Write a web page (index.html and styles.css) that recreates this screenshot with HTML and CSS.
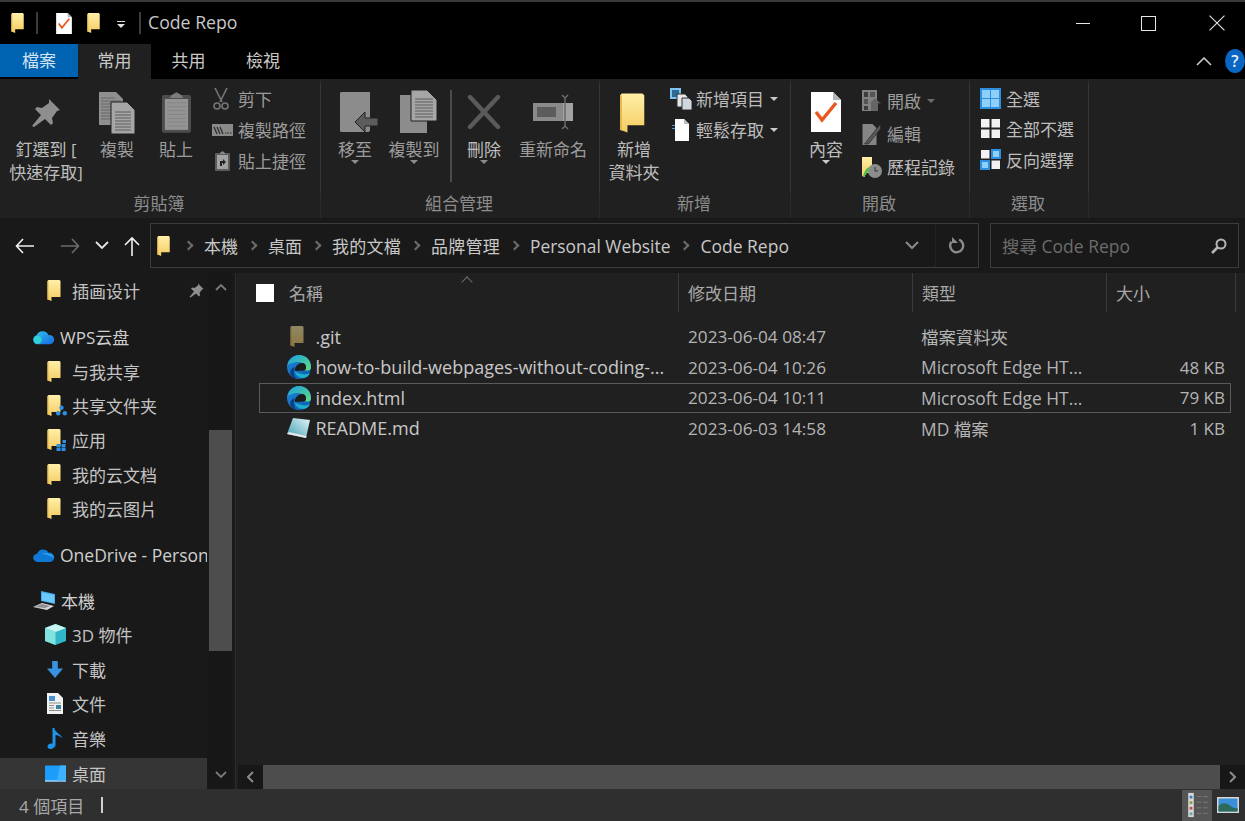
FILE: index.html
```html
<!DOCTYPE html>
<html lang="zh-Hant">
  <head>
    <title>Code Repo</title>
    <meta charset="UTF-8" />
    <link rel="stylesheet" href="styles.css">
  </head>
  <body>
    <svg class="defs" aria-hidden="true">
      <defs>
        <linearGradient id="yellow" x1="0" y1="0" x2="0" y2="1"><stop offset="0" stop-color="#fff0a8"/><stop offset="1" stop-color="#f5cb62"/></linearGradient>
        <linearGradient id="edgeTop" x1="0" y1="0" x2="1" y2="1"><stop offset="0" stop-color="#1a9fe0"/><stop offset="1" stop-color="#62dc84"/></linearGradient>
        <linearGradient id="edgeLow" x1="0" y1="0" x2="1" y2="1"><stop offset="0" stop-color="#1e88dc"/><stop offset="1" stop-color="#0b5aa8"/></linearGradient>
        <linearGradient id="paper" x1="1" y1="0" x2="0" y2="1"><stop offset="0" stop-color="#e6f6f8"/><stop offset="1" stop-color="#3d9db0"/></linearGradient>
        <linearGradient id="cloudWps" x1="0" y1="0" x2="1" y2="1"><stop offset="0" stop-color="#35c4f0"/><stop offset="1" stop-color="#1468e0"/></linearGradient>

        <symbol id="folder" viewBox="0 0 15 21"><path d="M0 1 1 0h11l1 1v16H4v4l-4-1.5z" fill="url(#yellow)"/><path d="M0 1v18.5L1 20V1z" fill="#e6b54c"/></symbol>
        <symbol id="edge" viewBox="0 0 24 24"><circle cx="12" cy="12" r="12" fill="url(#edgeLow)"/><path d="M.5 10C2 4 7 0 12 0c7 0 12 5 12 12 0 2-1 3.5-3 3.5h-4c1-1 1.5-2 1-3.5-1-3-4-5-7-5-5 0-9 2-10.5 3z" fill="url(#edgeTop)"/><path d="M8 16c-.5-4 3-8 7-8 3 0 4 2 4 4.5 0 1.5-.5 2.500-1.500 3z" fill="#1c1c1c"/><path d="M8 16c0 4 4 7 8 7 3 0 6-2 7-5-2 1-5 2-8 1-3-.5-6-1.5-7-3z" fill="#1cb0d0"/><path d="M8 12C4 13 2 17 4 20c1 1.5 3 3 5 3.5-2-3-3-7-1-11.5z" fill="#0a3f80"/></symbol>
        <symbol id="pin" viewBox="0 0 30 30"><path d="M18 1l11 11-3 1-5 7 1 5-2 2-6-6L3 29l-2-1 9-11-6-6 2-2 5 1 7-5z" fill="#8e8e8e"/></symbol>
        <symbol id="copy" viewBox="0 0 36 42"><path d="M0 0h17l7 7v26H0z" fill="#8f8f8f"/><path d="M2 6h14M2 9h20M2 12h10M2 15h10M2 18h10M2 21h10M2 24h10M2 27h10" stroke="#666"/><path d="M12 10h16l8 8v24H12z" fill="#a6a6a6" stroke="#202020"/><path d="M16 20h16M16 23h16M16 26h16M16 29h16M16 32h16M16 35h16M16 38h16" stroke="#5d5d5d"/></symbol>
        <symbol id="paste" viewBox="0 0 30 42"><rect y="3" width="30" height="39" rx="2" fill="#4d4d4d"/><path d="M10 3l5-3 5 3 2 3H8z" fill="#7c7c7c"/><path d="M3 7h24v32H3z" fill="#949494"/><path d="M5 11h20M5 15h20M5 19h20M5 23h20M5 27h20M5 31h20M5 35h20" stroke="#858585"/></symbol>
        <symbol id="scissors" viewBox="0 0 16 22"><path d="M2 0l7 14M14 0 7 14" stroke="#767676" stroke-width="1.6" fill="none"/><circle cx="4" cy="18" r="3" stroke="#767676" stroke-width="1.6" fill="none"/><circle cx="12" cy="18" r="3" stroke="#767676" stroke-width="1.6" fill="none"/></symbol>
        <symbol id="path" viewBox="0 0 21 12"><rect width="21" height="12" fill="#8a8a8a"/><path d="M2 3l3 7M5 3l3 7M8 3l3 7" stroke="#2a2a2a" stroke-width="1.2"/><path d="M13 9h1.5M15.5 9H17M18 9h1.5" stroke="#2a2a2a" stroke-width="1.2"/></symbol>
        <symbol id="shortcut" viewBox="0 0 15 20"><rect y="2" width="15" height="18" rx="1" fill="#5c5c5c"/><path d="M5 2l2.5-2L10 2v1H5z" fill="#8a8a8a"/><rect x="2" y="4" width="11" height="14" fill="#a3a3a3"/><path d="M5 15v-5h3V8l3 3-3 3v-2H7v3z" fill="#222"/></symbol>
        <symbol id="move" viewBox="0 0 38 42"><path d="M0 1l1-1h29v38l-1 2H1l-1-1z" fill="#8c8c8c"/><path d="M15 30 25 20v6h13v8H25v6z" fill="#5c5c5c" stroke="#202020"/></symbol>
        <symbol id="copyto" viewBox="0 0 38 44"><path d="M0 5h27v38H0z" fill="#8c8c8c"/><path d="M11 0h16l10 10v21H11z" fill="#a6a6a6" stroke="#202020"/><path d="M15 9h18M15 12h18M15 15h18M15 18h18M15 21h18M15 24h18M15 27h18" stroke="#5d5d5d"/></symbol>
        <symbol id="delete" viewBox="0 0 34 34"><path d="M3 2l14 15L31 2M3 32l14-15 14 15" stroke="#5a5a5a" stroke-width="4.4" stroke-linecap="round" fill="none"/></symbol>
        <symbol id="rename" viewBox="0 0 40 36"><rect y="9" width="30" height="18" fill="#8a8a8a"/><rect x="4" y="13" width="19" height="10" fill="#5c5c5c"/><rect x="30" y="9" width="10" height="18" fill="#a3a3a3"/><path d="M29 1l3 3 3-3M32 4v28M29 35l3-3 3 3" stroke="#6a6a6a" stroke-width="1.5" fill="none"/></symbol>
        <symbol id="newitem" viewBox="0 0 22 22"><rect width="11" height="11" fill="#7fc4ee"/><rect x="2" y="2" width="7" height="7" fill="#2d6b96"/><path d="M7 6h8l3 3v10H7z" fill="#e6e6e6" stroke="#333"/><path d="M12 10h7l3 3v9H12z" fill="#cfd8df" stroke="#333"/></symbol>
        <symbol id="easy" viewBox="0 0 17 22"><path d="M3 0h9l5 5v17H3z" fill="#fff"/><path d="M12 0v5h5z" fill="#bcbcbc"/><path d="M0 6h3v1H0zM0 9h3v1H0z" fill="#4a9be0"/></symbol>
        <symbol id="props" viewBox="0 0 30 40"><path d="M0 0h22l8 8v32H0z" fill="#fff"/><path d="M22 0v8h8z" fill="#b5b5b5"/><path d="M5 20l6 8L25 11" stroke="#e9581f" stroke-width="3.4" fill="none"/></symbol>
        <symbol id="open" viewBox="0 0 20 22"><rect width="15" height="21" fill="#828282"/><rect x="2" y="2" width="4" height="5" fill="#3d3d3d"/><rect x="8" y="2" width="5" height="5" fill="#555"/><rect x="2" y="9" width="4" height="5" fill="#555"/><rect x="2" y="16" width="4" height="4" fill="#3d3d3d"/><path d="M9 18v-5l-2 1 6-6 6 6-3-1v8H9z" fill="#656565"/></symbol>
        <symbol id="edit" viewBox="0 0 19 22"><path d="M0 1h10l4 4v17H0z" fill="#858585"/><path d="M2 21 13 7l5-6v5L6 21z" fill="#585858" stroke="#202020" stroke-width=".6"/></symbol>
        <symbol id="history" viewBox="0 0 20 22"><path d="M0 1h10v16H3v4l-3-1z" fill="url(#yellow)"/><circle cx="13" cy="15" r="7" fill="#8c8c8c"/><path d="M1 21c1-6 4-10 7-10-1 3-3 7-6 10z" fill="#4cc04c"/><path d="M13 11v4h3" stroke="#333" fill="none"/></symbol>
        <symbol id="allsel" viewBox="0 0 21 21"><path d="M0 0h21v21H0z" fill="#8fd0fb"/><path d="M0 0h21v21H0zM2 2v8h8V2zm9 0v8h8V2zM2 11v8h8v-8zm9 0v8h8v-8z" fill="#2d8fe0" fill-rule="evenodd"/></symbol>
        <symbol id="nonesel" viewBox="0 0 21 21"><path d="M1 1h8.5v8.5H1zM11.5 1H20v8.5h-8.5zM1 11.5h8.5V20H1zM11.5 11.5H20V20h-8.5z" fill="#f2f2f2"/></symbol>
        <symbol id="invsel" viewBox="0 0 21 21"><path d="M0 11h10v10H0zM11 0h10v10H11z" fill="#2d8fe0"/><path d="M2 13h6v6H2zM13 2h6v6h-6z" fill="#8fd0fb"/><path d="M1 1h8.5v8.5H1zM11.5 11.5H20V20h-8.5z" fill="#f2f2f2"/></symbol>
        <symbol id="readme" viewBox="0 0 24 22"><path d="M6 1l17 2-4 18L0 17z" fill="url(#paper)"/><path d="M0 17l19 4 .5-2L2 15z" fill="#e8e8e8"/></symbol>
        <symbol id="wps" viewBox="0 0 24 16"><path d="M5 16a5 5 0 0 1-1-9.8A7 7 0 0 1 17 6a5 5 0 0 1 2 10z" fill="url(#cloudWps)"/><circle cx="5" cy="11" r="4.5" fill="#2fd0d8"/></symbol>
        <symbol id="onedrive" viewBox="0 0 24 15"><path d="M5 15a4.5 4.5 0 0 1-.5-9A7 7 0 0 1 17 5a5 5 0 0 1 2 10z" fill="#0f78d4"/><path d="M9 6c2-1 6-1 8 0 3 0 6 3 6 5-3-2-9-5-14-5z" fill="#2ea6ef"/></symbol>
        <symbol id="pc" viewBox="0 0 23 20"><path d="M8 0l14 3v10L8 10z" fill="#41a9ee"/><path d="M9 1.5l12 2.5v8L9 9.5z" fill="#6cc7fa"/><path d="M0 16l9-4 12 3-7 4z" fill="#d6d6d6"/><path d="M2 16l7-3 8 2-5 2z" fill="#8d8d8d"/></symbol>
        <symbol id="cube" viewBox="0 0 21 21"><path d="M10.5 0 21 4v13l-10.5 4L0 17V4z" fill="#2fb7c8"/><path d="M10.5 0 21 4l-10.5 4L0 4z" fill="#c9f5f2"/><path d="M0 4l10.5 4v13L0 17z" fill="#82e3de"/></symbol>
        <symbol id="down" viewBox="0 0 17 18"><path d="M5.5 0h6v8H17l-8.5 10L0 8h5.5z" fill="#3793e0"/></symbol>
        <symbol id="doc" viewBox="0 0 16 21"><path d="M0 0h11l5 5v16H0z" fill="#f2f2f2"/><path d="M2 3h6v5H2z" fill="#4a90d0"/><path d="M2 10h12M2 12.5h5M2 15h5M2 17.5h12" stroke="#8c8c8c"/><path d="M9 12h5v4H9z" fill="#3d7f9e"/></symbol>
        <symbol id="note" viewBox="0 0 15 21"><path d="M5 0h2c0 4 6 6 8 10-3-2-5-3-7-3v10c0 2-3 4-5 4s-3-1-3-2.5C0 16 3 15 5 15.5z" fill="#1e93e8"/></symbol>
        <symbol id="desktop" viewBox="0 0 21 16"><rect width="21" height="16" fill="#1c9cfb"/><path d="M0 15h21v1H0z" fill="#d8f0ff"/><path d="M15 0h6v15h-9z" fill="#3fb0fd"/></symbol>
        <symbol id="share-badge" viewBox="0 0 10 10"><circle cx="5" cy="2.5" r="2" fill="#2b8fe6"/><circle cx="2" cy="7.5" r="2" fill="#2b8fe6"/><circle cx="8" cy="7.5" r="2" fill="#2b8fe6"/></symbol>
        <symbol id="app-badge" viewBox="0 0 10 11"><path d="M0 4h4v3H0zM5 4h4v3H5zM0 7.5h4V11H0zM5 7.5h4V11H5zM6 0h3.5v3H6z" fill="#2b8fe6"/></symbol>
      </defs>
    </svg>

    <div class="titlebar">
      <svg class="qa-folder"><use href="#folder"/></svg>
      <span class="qa-line"></span>
      <svg class="qa-check"><use href="#props"/></svg>
      <svg class="qa-folder2"><use href="#folder"/></svg>
      <span class="qa-more"></span>
      <span class="qa-line qa-line-2"></span>
      <span class="window-title">Code Repo</span>
      <div class="window-btns">
        <span class="win-min"></span>
        <span class="win-max"></span>
        <svg class="win-close" viewBox="0 0 15 15"><path d="M.5.5l14 14M14.5.5l-14 14" stroke="#e6e6e6" fill="none"/></svg>
      </div>
    </div>

    <div class="tabs">
      <div class="tab tab-file">檔案</div>
      <div class="tab tab-active">常用</div>
      <div class="tab tab-share">共用</div>
      <div class="tab">檢視</div>
      <svg class="ribbon-toggle" viewBox="0 0 16 9"><path d="M1 8l7-7 7 7" stroke="#c8c8c8" stroke-width="1.6" fill="none"/></svg>
      <span class="help">?</span>
    </div>

    <div class="ribbon">
      <section class="group group-clip">
        <div class="group-body">
          <div class="big big-pin"><svg class="big-ico ico-pin"><use href="#pin"/></svg><span>釘選到 [<br>快速存取]</span></div>
          <div class="big big-copy"><svg class="big-ico ico-copy"><use href="#copy"/></svg><span>複製</span></div>
          <div class="big big-paste"><svg class="big-ico ico-paste"><use href="#paste"/></svg><span>貼上</span></div>
          <div class="small-col small-clip">
            <div class="small"><svg class="sm-ico ico-scissors"><use href="#scissors"/></svg>剪下</div>
            <div class="small"><svg class="sm-ico ico-path"><use href="#path"/></svg>複製路徑</div>
            <div class="small"><svg class="sm-ico ico-shortcut"><use href="#shortcut"/></svg>貼上捷徑</div>
          </div>
        </div>
        <div class="group-label">剪貼簿</div>
      </section>

      <section class="group group-org">
        <div class="group-body">
          <div class="big big-move"><svg class="big-ico ico-move"><use href="#move"/></svg><span>移至</span><i class="caret"></i></div>
          <div class="big big-copyto"><svg class="big-ico ico-copyto"><use href="#copyto"/></svg><span>複製到</span><i class="caret"></i></div>
          <span class="group-sep"></span>
          <div class="big big-delete"><svg class="big-ico ico-delete"><use href="#delete"/></svg><span class="bright">刪除</span><i class="caret"></i></div>
          <div class="big big-rename"><svg class="big-ico ico-rename"><use href="#rename"/></svg><span>重新命名</span></div>
        </div>
        <div class="group-label">組合管理</div>
      </section>

      <section class="group group-new">
        <div class="group-body">
          <div class="big big-newfolder"><svg class="big-ico ico-newfolder"><use href="#folder"/></svg><span class="bright">新增<br>資料夾</span></div>
          <div class="small-col small-new">
            <div class="small bright"><svg class="sm-ico ico-newitem"><use href="#newitem"/></svg>新增項目<i class="caret-side"></i></div>
            <div class="small bright"><svg class="sm-ico ico-easy"><use href="#easy"/></svg>輕鬆存取<i class="caret-side"></i></div>
          </div>
        </div>
        <div class="group-label">新增</div>
      </section>

      <section class="group group-open">
        <div class="group-body">
          <div class="big big-props"><svg class="big-ico ico-props"><use href="#props"/></svg><span class="bright">內容</span><i class="caret caret-light"></i></div>
          <div class="small-col small-open">
            <div class="small"><svg class="sm-ico ico-open"><use href="#open"/></svg>開啟<i class="caret-side caret-dim"></i></div>
            <div class="small"><svg class="sm-ico ico-edit"><use href="#edit"/></svg>編輯</div>
            <div class="small bright"><svg class="sm-ico ico-history"><use href="#history"/></svg>歷程記錄</div>
          </div>
        </div>
        <div class="group-label">開啟</div>
      </section>

      <section class="group group-select">
        <div class="group-body">
          <div class="small-col small-select">
            <div class="small bright"><svg class="sm-ico ico-grid"><use href="#allsel"/></svg>全選</div>
            <div class="small bright"><svg class="sm-ico ico-grid"><use href="#nonesel"/></svg>全部不選</div>
            <div class="small bright"><svg class="sm-ico ico-grid"><use href="#invsel"/></svg>反向選擇</div>
          </div>
        </div>
        <div class="group-label">選取</div>
      </section>
    </div>

    <div class="navbar">
      <div class="nav-btns">
        <svg class="nav-back" viewBox="0 0 20 16"><path d="M19 8H2M8 1 1.5 8 8 15" stroke="#f0f0f0" stroke-width="1.6" fill="none"/></svg>
        <svg class="nav-forward" viewBox="0 0 20 16"><path d="M1 8h17M12 1l6.5 7-6.5 7" stroke="#6c6c6c" stroke-width="1.6" fill="none"/></svg>
        <svg class="nav-recent" viewBox="0 0 14 9"><path d="M1 1l6 6 6-6" stroke="#e6e6e6" stroke-width="1.8" fill="none"/></svg>
        <svg class="nav-up" viewBox="0 0 16 20"><path d="M8 20V2M1 9l7-7 7 7" stroke="#f0f0f0" stroke-width="1.6" fill="none"/></svg>
      </div>
      <div class="address">
        <svg class="addr-folder"><use href="#folder"/></svg>
        <i class="crumb-sep"></i><span>本機</span>
        <i class="crumb-sep"></i><span>桌面</span>
        <i class="crumb-sep"></i><span class="crumb-long">我的文檔</span>
        <i class="crumb-sep"></i><span class="crumb-long">品牌管理</span>
        <i class="crumb-sep"></i><span class="crumb-site">Personal Website</span>
        <i class="crumb-sep"></i><span class="latin">Code Repo</span>
        <svg class="addr-drop" viewBox="0 0 14 9"><path d="M1 1l6 6 6-6" stroke="#8a8a8a" stroke-width="2" fill="none"/></svg>
        <span class="addr-refresh">
          <svg viewBox="0 0 16 17"><path d="M4 3.5A6.5 6.5 0 1 0 12 3.5" stroke="#8a8a8a" stroke-width="2.4" fill="none" transform="rotate(-15 8 10)"/><path d="M3 0v6h6z" fill="#8a8a8a"/></svg>
        </span>
      </div>
      <div class="search">
        <span class="latin">搜尋 Code Repo</span>
        <svg viewBox="0 0 16 16"><circle cx="10" cy="6" r="4.5" stroke="#b5b5b5" stroke-width="2" fill="none"/><path d="M6.5 9.5 1 15" stroke="#b5b5b5" stroke-width="2.6"/></svg>
      </div>
    </div>

    <div class="content">
      <aside class="sidebar">
        <div class="side-list">
          <div class="side-row"><svg class="side-ico"><use href="#folder"/></svg>插画设计<svg class="side-pin"><use href="#pin"/></svg></div>
          <div class="side-row side-head side-first"><svg class="head-ico"><use href="#wps"/></svg>WPS云盘</div>
          <div class="side-row"><svg class="side-ico"><use href="#folder"/></svg>与我共享</div>
          <div class="side-row"><svg class="side-ico"><use href="#folder"/></svg><svg class="badge"><use href="#share-badge"/></svg>共享文件夹</div>
          <div class="side-row"><svg class="side-ico"><use href="#folder"/></svg><svg class="badge"><use href="#app-badge"/></svg>应用</div>
          <div class="side-row"><svg class="side-ico"><use href="#folder"/></svg>我的云文档</div>
          <div class="side-row"><svg class="side-ico"><use href="#folder"/></svg>我的云图片</div>
          <div class="side-row side-head side-first latin"><svg class="head-ico"><use href="#onedrive"/></svg>OneDrive - Personal</div>
          <div class="side-row side-head side-first"><svg class="head-ico head-pc"><use href="#pc"/></svg>本機</div>
          <div class="side-row"><svg class="side-ico side-wide"><use href="#cube"/></svg>3D 物件</div>
          <div class="side-row"><svg class="side-ico"><use href="#down"/></svg>下載</div>
          <div class="side-row"><svg class="side-ico"><use href="#doc"/></svg>文件</div>
          <div class="side-row"><svg class="side-ico"><use href="#note"/></svg>音樂</div>
          <div class="side-row side-active"><svg class="side-ico side-wide"><use href="#desktop"/></svg>桌面</div>
        </div>
        <div class="vscroll">
          <svg class="scroll-arrow" viewBox="0 0 12 7"><path d="M1 6l5-5 5 5" stroke="#7a7a7a" stroke-width="1.8" fill="none"/></svg>
          <div class="vscroll-track"><div class="vscroll-thumb"></div></div>
          <svg class="scroll-arrow" viewBox="0 0 12 7"><path d="M1 1l5 5 5-5" stroke="#7a7a7a" stroke-width="1.8" fill="none"/></svg>
        </div>
      </aside>

      <main class="files">
        <div class="list-head">
          <div class="head-name"><span class="check-all"></span>名稱<i class="sort-up"></i></div>
          <div class="head-cell head-date">修改日期</div>
          <div class="head-cell head-type">類型</div>
          <div class="head-cell head-size">大小</div>
        </div>
        <div class="file-list">
          <div class="file-row">
            <div class="file-name"><svg class="file-ico file-folder"><use href="#folder"/></svg>.git</div>
            <div class="file-date">2023-06-04 08:47</div>
            <div class="file-type">檔案資料夾</div>
            <div class="file-size"></div>
          </div>
          <div class="file-row">
            <div class="file-name"><svg class="file-ico"><use href="#edge"/></svg>how-to-build-webpages-without-coding-...</div>
            <div class="file-date">2023-06-04 10:26</div>
            <div class="file-type">Microsoft Edge HT...</div>
            <div class="file-size">48 KB</div>
          </div>
          <div class="file-row file-focus">
            <div class="file-name"><svg class="file-ico"><use href="#edge"/></svg>index.html</div>
            <div class="file-date">2023-06-04 10:11</div>
            <div class="file-type">Microsoft Edge HT...</div>
            <div class="file-size">79 KB</div>
          </div>
          <div class="file-row">
            <div class="file-name"><svg class="file-ico"><use href="#readme"/></svg>README.md</div>
            <div class="file-date">2023-06-03 14:58</div>
            <div class="file-type">MD 檔案</div>
            <div class="file-size">1 KB</div>
          </div>
        </div>
        <div class="hscroll">
          <div class="hscroll-btn"><svg viewBox="0 0 7 12"><path d="M6 1 1 6l5 5" stroke="#8a8a8a" stroke-width="2" fill="none"/></svg></div>
          <div class="hscroll-thumb"></div>
          <div class="hscroll-btn"><svg viewBox="0 0 7 12"><path d="M1 1l5 5-5 5" stroke="#8a8a8a" stroke-width="2" fill="none"/></svg></div>
        </div>
      </main>
    </div>

    <div class="statusbar">
      <span class="status-count">4 個項目</span>
      <span class="status-bar-mark"></span>
      <div class="view-btns">
        <span class="view-btn view-active">
          <svg viewBox="0 0 22 28"><rect x="1" y="1" width="6" height="26" fill="#d8d8d8"/><path d="M2.5 4h3v3h-3z" fill="#3a7fc0"/><path d="M2.5 10h3v3h-3z" fill="#8aa040"/><path d="M2.5 16h3v3h-3z" fill="#c05040"/><path d="M2.5 22h3v3h-3z" fill="#70a0a0"/><path d="M10 5h5M17 5h5M10 11h5M17 11h5M10 17h5M17 17h5M10 23h5M17 23h5" stroke="#7c7c7c"/></svg>
        </span>
        <span class="view-btn">
          <svg viewBox="0 0 22 16"><rect width="22" height="16" fill="#d6d6d6"/><rect x="1.5" y="1.5" width="19" height="13" fill="#3b8fd8"/><path d="M1.5 9c4-4 8-3 12 0s5 2 7 2v3.5h-19z" fill="#2f6a58"/></svg>
        </span>
      </div>
    </div>
  </body>
</html>
```

FILE: styles.css
```css
* {
  box-sizing: border-box;
}
html,
body {
  margin: 0;
  padding: 0;
  height: 821px;
  overflow: hidden;
}
body {
  display: flex;
  flex-direction: column;
  background-color: #202020;
  color: #c4c4c4;
  font-family: "Open Sans", "Noto Sans CJK TC", sans-serif;
  font-size: 17px;
}
.defs {
  display: block;
  width: 0;
  height: 0;
}
.latin {
  font-size: 17.5px;
}

/* title bar */
.titlebar {
  display: flex;
  align-items: center;
  height: 44px;
  flex: none;
  background-color: #000;
  border-top: 2px solid #3a3a3a;
  padding-left: 11px;
}
.qa-folder {
  width: 15px;
  height: 20px;
}
.qa-line {
  width: 2px;
  height: 22px;
  margin-left: 10px;
  background-color: #3c3c3c;
}
.qa-check {
  width: 16px;
  height: 21px;
  margin-left: 18px;
}
.qa-folder2 {
  width: 15px;
  height: 20px;
  margin-left: 15px;
}
.qa-more {
  width: 8px;
  height: 8px;
  margin-left: 15px;
  margin-top: 4px;
  border-top: 1px solid #ddd;
}
.qa-more::after {
  content: "";
  display: block;
  margin-top: 2px;
  border-left: 4px solid transparent;
  border-right: 4px solid transparent;
  border-top: 4px solid #ddd;
}
.qa-line-2 {
  margin-left: 14px;
}
.window-title {
  margin-left: 7px;
  padding-bottom: 2px;
  font-size: 17.7px;
  color: #c8c8c8;
}
.window-btns {
  display: flex;
  align-items: center;
  margin-left: auto;
  padding-right: 20px;
}
.win-min {
  width: 14px;
  height: 1px;
  background-color: #e6e6e6;
}
.win-max {
  width: 15px;
  height: 15px;
  margin-left: 51px;
  border: 1px solid #e6e6e6;
}
.win-close {
  width: 16px;
  height: 16px;
  margin-left: 53px;
}

/* tabs */
.tabs {
  display: flex;
  height: 35px;
  flex: none;
  background-color: #000;
  align-items: stretch;
}
.tab {
  display: flex;
  align-items: center;
  justify-content: center;
  width: 74px;
  padding-bottom: 5px;
  color: #c8c8c8;
  font-size: 17px;
}
.tab-file {
  width: 78px;
  height: 33px;
  padding-bottom: 3px;
  background-color: #0063b1;
  color: #d5e3f0;
}
.tab-active {
  width: 73px;
  background-color: #202020;
}
.tab-share {
  width: 75px;
}
.ribbon-toggle {
  width: 16px;
  height: 9px;
  margin: 13px 0 0 auto;
}
.help {
  width: 20px;
  height: 24px;
  margin: 5px 0 0 13px;
  border-radius: 50%;
  background-color: #0a66c2;
  color: #e8f0f8;
  font-size: 16px;
  font-weight: 600;
  line-height: 24px;
  text-align: center;
}

/* ribbon */
.ribbon {
  display: flex;
  height: 139px;
  flex: none;
  background-color: #202020;
}
.group {
  display: flex;
  flex-direction: column;
  flex: none;
  border-right: 1px solid #2a2a2a;
}
.group-body {
  display: flex;
  height: 110px;
  border-right: 1px solid #363636;
  margin-right: -1px;
  margin-top: 4px;
}
.group-label {
  flex: 1;
  padding-right: 2px;
  text-align: center;
  color: #8c8c8c;
  font-size: 17px;
  line-height: 22px;
}
.group-clip {
  width: 321px;
}
.group-org {
  width: 279px;
}
.group-new {
  width: 191px;
}
.group-open {
  width: 179px;
}
.group-select {
  width: 119px;
}
.big {
  position: relative;
  display: flex;
  flex-direction: column;
  align-items: center;
  flex: none;
  color: #9c9c9c;
  font-size: 17px;
  line-height: 23px;
  text-align: center;
}
.big span {
  position: absolute;
  top: 55px;
  left: -4px;
  right: -4px;
  white-space: nowrap;
}
.bright {
  color: #c2c2c2;
}
.big span.bright {
  color: #bdbdbd;
}
.big-ico {
  display: block;
}
.big-pin {
  width: 92px;
  color: #bdbdbd;
}
.big-copy {
  width: 50px;
}
.big-paste {
  width: 68px;
}
.big-move {
  width: 68px;
}
.big-copyto {
  width: 50px;
}
.group-sep {
  width: 2px;
  height: 92px;
  margin: 7px 0 0 11px;
  background-color: #4a4a4a;
}
.big-delete {
  width: 64px;
}
.big-rename {
  width: 74px;
}
.big-newfolder {
  width: 68px;
}
.big-props {
  width: 70px;
}
.ico-pin {
  width: 30px;
  height: 30px;
  margin-top: 15px;
}
.ico-copy {
  width: 36px;
  height: 42px;
  margin-top: 9px;
}
.ico-paste {
  width: 29px;
  height: 41px;
  margin-top: 9px;
}
.ico-move {
  width: 38px;
  height: 42px;
  margin-top: 9px;
  margin-left: 8px;
}
.ico-copyto {
  width: 38px;
  height: 44px;
  margin-top: 7px;
  margin-left: 10px;
}
.ico-delete {
  width: 34px;
  height: 34px;
  margin-top: 12px;
}
.ico-rename {
  width: 40px;
  height: 36px;
  margin-top: 11px;
}
.ico-newfolder {
  width: 28px;
  height: 40px;
  margin-top: 10px;
}
.ico-props {
  width: 30px;
  height: 40px;
  margin-top: 9px;
}
.caret {
  position: absolute;
  top: 77px;
  left: 50%;
  margin-left: -4px;
  border-left: 4px solid transparent;
  border-right: 4px solid transparent;
  border-top: 4px solid #8c8c8c;
}
.caret-light {
  border-top-color: #c8c8c8;
}
.caret-side {
  display: inline-block;
  margin-left: 6px;
  border-left: 4px solid transparent;
  border-right: 4px solid transparent;
  border-top: 4px solid #c8c8c8;
}
.caret-dim {
  border-top-color: #6c6c6c;
}
.small-col {
  display: flex;
  flex-direction: column;
  flex: none;
}
.small {
  display: flex;
  align-items: center;
  color: #9c9c9c;
  white-space: nowrap;
}
.small.bright {
  color: #bdbdbd;
}
.small-clip {
  padding-left: 2px;
}
.small-clip .small {
  height: 31px;
}
.sm-ico {
  flex: none;
}
.ico-scissors {
  width: 16px;
  height: 22px;
  margin: 0 9px 0 1px;
}
.ico-path {
  width: 21px;
  height: 12px;
  margin-right: 5px;
}
.ico-shortcut {
  width: 15px;
  height: 20px;
  margin: 0 8px 0 3px;
}
.small-new {
  padding-left: 2px;
}
.small-new .small {
  height: 31px;
}
.ico-newitem {
  width: 22px;
  height: 22px;
  margin-right: 4px;
}
.ico-easy {
  width: 17px;
  height: 22px;
  margin: 0 7px 0 2px;
}
.small-open {
  margin-top: 1px;
  padding-left: 1px;
}
.small-open .small {
  height: 33px;
}
.ico-open,
.ico-edit,
.ico-history {
  width: 20px;
  height: 22px;
  margin-right: 5px;
}
.small-select {
  padding-left: 10px;
}
.small-select .small {
  height: 30.5px;
}
.ico-grid {
  width: 21px;
  height: 21px;
  margin-right: 5px;
}

/* address row */
.navbar {
  display: flex;
  align-items: center;
  height: 55px;
  flex: none;
  background-color: #191919;
  padding: 0 7px 0 0;
}
.nav-btns {
  display: flex;
  align-items: center;
  width: 150px;
  flex: none;
}
.nav-back {
  width: 20px;
  height: 16px;
  margin-left: 15px;
}
.nav-forward {
  width: 20px;
  height: 16px;
  margin-left: 25px;
}
.nav-recent {
  width: 14px;
  height: 9px;
  margin-left: 15px;
}
.nav-up {
  width: 16px;
  height: 20px;
  margin-left: 15px;
}
.address {
  display: flex;
  align-items: center;
  width: 829px;
  height: 45px;
  flex: none;
  border: 1px solid #3c3c3c;
  padding-left: 6px;
  color: #c8c8c8;
}
.addr-folder {
  width: 15px;
  height: 20px;
  margin-right: 2px;
}
.crumb-sep {
  width: 7px;
  height: 7px;
  margin: 0 12px 0 11px;
  border-top: 2px solid #6c6c6c;
  border-right: 2px solid #6c6c6c;
  transform: rotate(45deg);
}
.crumb-long {
  letter-spacing: 0.25px;
}
.crumb-site {
  font-size: 17.4px;
}
.addr-drop {
  width: 14px;
  height: 9px;
  margin-left: auto;
}
.addr-refresh {
  display: flex;
  align-items: center;
  justify-content: center;
  width: 43px;
  height: 100%;
  margin-left: 16px;
  border-left: 1px solid #222;
}
.addr-refresh svg {
  width: 16px;
  height: 17px;
}
.search {
  display: flex;
  align-items: center;
  justify-content: space-between;
  width: 249px;
  height: 45px;
  flex: none;
  margin-left: 11px;
  padding: 0 11px;
  border: 1px solid #3c3c3c;
  color: #6c6c6c;
}
.search svg {
  width: 16px;
  height: 16px;
}

/* sidebar + list */
.content {
  display: flex;
  flex: 1;
  min-height: 0;
}
.sidebar {
  display: flex;
  width: 235px;
  flex: none;
  background-color: #191919;
}
.side-list {
  display: flex;
  flex-direction: column;
  gap: 4px;
  width: 207px;
  flex: none;
  padding-top: 2.5px;
  overflow: hidden;
  white-space: nowrap;
}
.side-row {
  position: relative;
  display: flex;
  align-items: center;
  height: 30.4px;
  flex: none;
  padding-left: 47px;
  color: #c4c4c4;
}
.side-active {
  margin-top: 1px;
  background-color: #353535;
}
.side-first {
  margin-top: 11.6px;
}
.side-head {
  padding-left: 33px;
  color: #cfcfcf;
}
.side-ico {
  width: 16px;
  height: 21px;
  margin-right: 9px;
  flex: none;
}
.side-wide {
  width: 21px;
  margin-left: -2px;
  margin-right: 6px;
}
.head-ico {
  width: 22px;
  height: 16px;
  margin-right: 5px;
  flex: none;
}
.head-pc {
  width: 23px;
  height: 20px;
  margin-right: 5px;
}
.side-pin {
  width: 15px;
  height: 15px;
  margin-left: auto;
  margin-right: 3px;
}
.badge {
  position: absolute;
  left: 56px;
  top: 15px;
  width: 11px;
  height: 11px;
}
.vscroll {
  display: flex;
  flex-direction: column;
  align-items: center;
  width: 23px;
  margin-left: 2px;
  background-color: #171717;
}
.scroll-arrow {
  width: 12px;
  height: 7px;
  flex: none;
  margin: 11px 0;
}
.vscroll-track {
  flex: 1;
  width: 100%;
  padding-top: 128px;
}
.vscroll-thumb {
  width: 100%;
  height: 221px;
  background-color: #4d4d4d;
}
.files {
  display: flex;
  flex-direction: column;
  flex: 1;
  min-width: 0;
  border-left: 1px solid #2b2b2b;
  background-color: #202020;
}
.list-head {
  display: flex;
  height: 39px;
  flex: none;
}
.head-name {
  position: relative;
  display: flex;
  align-items: center;
  width: 442px;
  padding-left: 20px;
  color: #a8a8a8;
}
.check-all {
  width: 18px;
  height: 18px;
  margin-right: 15px;
  background-color: #fff;
}
.sort-up {
  position: absolute;
  left: 227px;
  top: 5px;
  width: 8px;
  height: 8px;
  border-top: 1px solid #6c6c6c;
  border-left: 1px solid #6c6c6c;
  transform: rotate(45deg);
}
.head-cell {
  display: flex;
  align-items: center;
  padding-left: 9px;
  border-left: 1px solid #3a3a3a;
  color: #a8a8a8;
}
.head-date {
  width: 234px;
}
.head-type {
  width: 194px;
}
.head-size {
  width: 130px;
  border-right: 1px solid #3a3a3a;
}
.file-list {
  flex: 1;
  padding-top: 9.5px;
}
.file-row {
  display: grid;
  grid-template-columns: 418px 234px 194px 1fr;
  align-items: center;
  height: 30.5px;
  margin: 0 14px 0 23px;
  border: 1px solid transparent;
}
.file-focus {
  border-color: #5a5a5a;
}
.file-name {
  display: flex;
  align-items: center;
  padding-left: 26.5px;
  font-size: 18px;
  color: #c8c8c8;
  white-space: nowrap;
}
.file-ico {
  width: 24px;
  height: 24px;
  margin-right: 5px;
  flex: none;
}
.file-folder {
  width: 18px;
  height: 21px;
  margin-left: 2px;
  margin-right: 9px;
  opacity: 0.5;
}
.file-date,
.file-type,
.file-size {
  color: #b4b4b4;
  white-space: nowrap;
}
.file-date {
  padding-left: 10px;
  font-size: 17.2px;
}
.file-type {
  padding-left: 9px;
  font-size: 17.4px;
}
.file-size {
  text-align: right;
  padding-right: 5px;
}
.hscroll {
  display: flex;
  align-items: stretch;
  height: 24px;
  flex: none;
  margin-left: 2px;
  background-color: #171717;
}
.hscroll-btn {
  display: flex;
  align-items: center;
  justify-content: center;
  width: 25px;
  flex: none;
}
.hscroll-btn svg {
  width: 7px;
  height: 12px;
}
.hscroll-thumb {
  flex: 1;
  background-color: #4d4d4d;
}

/* status bar */
.statusbar {
  display: flex;
  align-items: center;
  height: 32px;
  flex: none;
  background-color: #2f2f2f;
  padding-left: 19px;
}
.status-count {
  color: #a8a8a8;
}
.status-bar-mark {
  width: 2px;
  height: 16px;
  margin-left: 17px;
  background-color: #d0d0d0;
}
.view-btns {
  display: flex;
  align-items: center;
  height: 100%;
  margin-left: auto;
  padding-right: 3px;
}
.view-btn {
  display: flex;
  align-items: center;
  justify-content: center;
  width: 28px;
  height: 31px;
}
.view-active {
  width: 30px;
  background-color: #555;
  margin-right: 2px;
}
.view-btn svg {
  width: 22px;
  height: 16px;
}
.view-active svg {
  width: 21px;
  height: 26px;
}
```
